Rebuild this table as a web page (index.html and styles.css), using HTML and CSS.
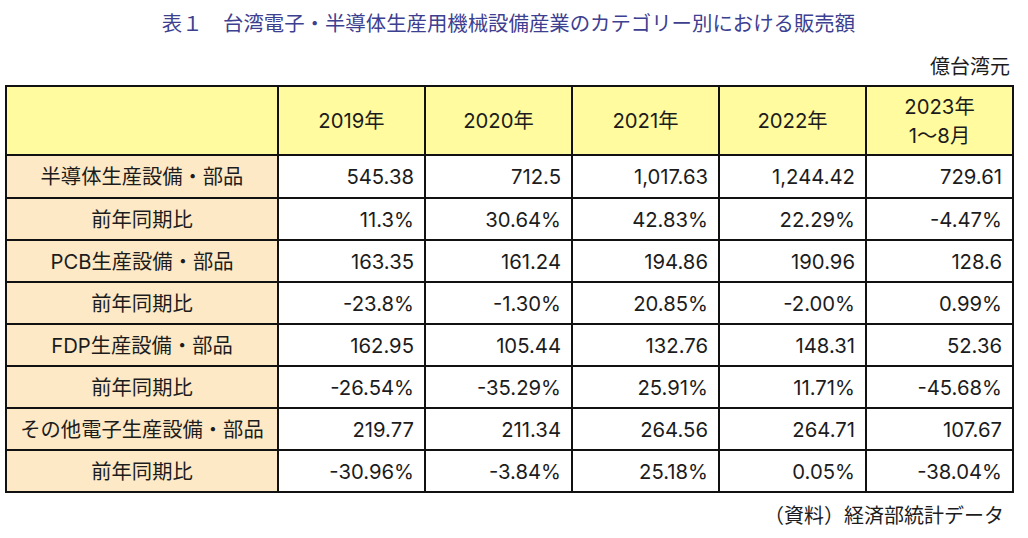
FILE: index.html
```html
<!DOCTYPE html>
<html lang="ja">
<head>
<meta charset="utf-8">
<link rel="stylesheet" href="styles.css">
</head>
<body>
<div class="page">
  <h1 class="title">表１　台湾電子・半導体生産用機械設備産業のカテゴリー別における販売額</h1>
  <div class="unit">億台湾元</div>
  <table class="sales">
    <colgroup>
      <col class="c-label">
      <col class="c-num"><col class="c-num"><col class="c-num"><col class="c-num"><col class="c-num">
    </colgroup>
    <thead>
      <tr>
        <th class="corner"></th>
        <th>2019年</th>
        <th>2020年</th>
        <th>2021年</th>
        <th>2022年</th>
        <th>2023年<br>1～8月</th>
      </tr>
    </thead>
    <tbody>
      <tr class="first"><th>半導体生産設備・部品</th><td>545.38</td><td>712.5</td><td>1,017.63</td><td>1,244.42</td><td>729.61</td></tr>
      <tr><th>前年同期比</th><td>11.3%</td><td>30.64%</td><td>42.83%</td><td>22.29%</td><td>-4.47%</td></tr>
      <tr><th>PCB生産設備・部品</th><td>163.35</td><td>161.24</td><td>194.86</td><td>190.96</td><td>128.6</td></tr>
      <tr><th>前年同期比</th><td>-23.8%</td><td>-1.30%</td><td>20.85%</td><td>-2.00%</td><td>0.99%</td></tr>
      <tr><th>FDP生産設備・部品</th><td>162.95</td><td>105.44</td><td>132.76</td><td>148.31</td><td>52.36</td></tr>
      <tr><th>前年同期比</th><td>-26.54%</td><td>-35.29%</td><td>25.91%</td><td>11.71%</td><td>-45.68%</td></tr>
      <tr><th>その他電子生産設備・部品</th><td>219.77</td><td>211.34</td><td>264.56</td><td>264.71</td><td>107.67</td></tr>
      <tr><th>前年同期比</th><td>-30.96%</td><td>-3.84%</td><td>25.18%</td><td>0.05%</td><td>-38.04%</td></tr>
    </tbody>
  </table>
  <div class="source">（資料）経済部統計データ</div>
</div>
</body>
</html>
```
FILE: styles.css
```css
html, body {
  margin: 0;
  padding: 0;
  background: #ffffff;
}

body {
  font-family: "Noto Sans CJK JP", "Noto Sans", sans-serif;
  color: #1c1c1c;
}

.page {
  width: 1028px;
  height: 538px;
  padding: 0 16px 0 5px;
  box-sizing: border-box;
  display: flex;
  flex-direction: column;
}

.title {
  margin: 0;
  padding-top: 8px;
  font-size: 20.4px;
  line-height: 28px;
  font-weight: normal;
  text-align: center;
  color: #3d4090;
}

.unit {
  margin-top: 17px;
  align-self: flex-end;
  margin-right: 2px;
  font-size: 20px;
  line-height: 26px;
}

.sales {
  margin-top: 6px;
  width: 1008px;
  border-collapse: collapse;
  table-layout: fixed;
  border: 2px solid #111;
  font-family: "Inter", "Noto Sans CJK JP", sans-serif;
  font-size: 20.3px;
}

.c-label { width: 272px; }
.c-num { width: 147px; }

.sales th,
.sales td {
  border: 2px solid #111;
  padding: 0;
  font-weight: normal;
  line-height: 29px;
}

.sales thead th {
  background: #fffb9e;
  text-align: center;
  height: 67px;
}

.sales tbody th {
  background: #fde9c6;
  text-align: center;
  height: 40px;
}

.sales tbody tr.first th,
.sales tbody tr.first td {
  height: 41px;
}

.sales td {
  text-align: right;
  padding-right: 10px;
  background: #ffffff;
}

.source {
  margin-top: 7px;
  align-self: flex-end;
  margin-right: 8px;
  font-size: 20px;
  line-height: 30px;
}
```
